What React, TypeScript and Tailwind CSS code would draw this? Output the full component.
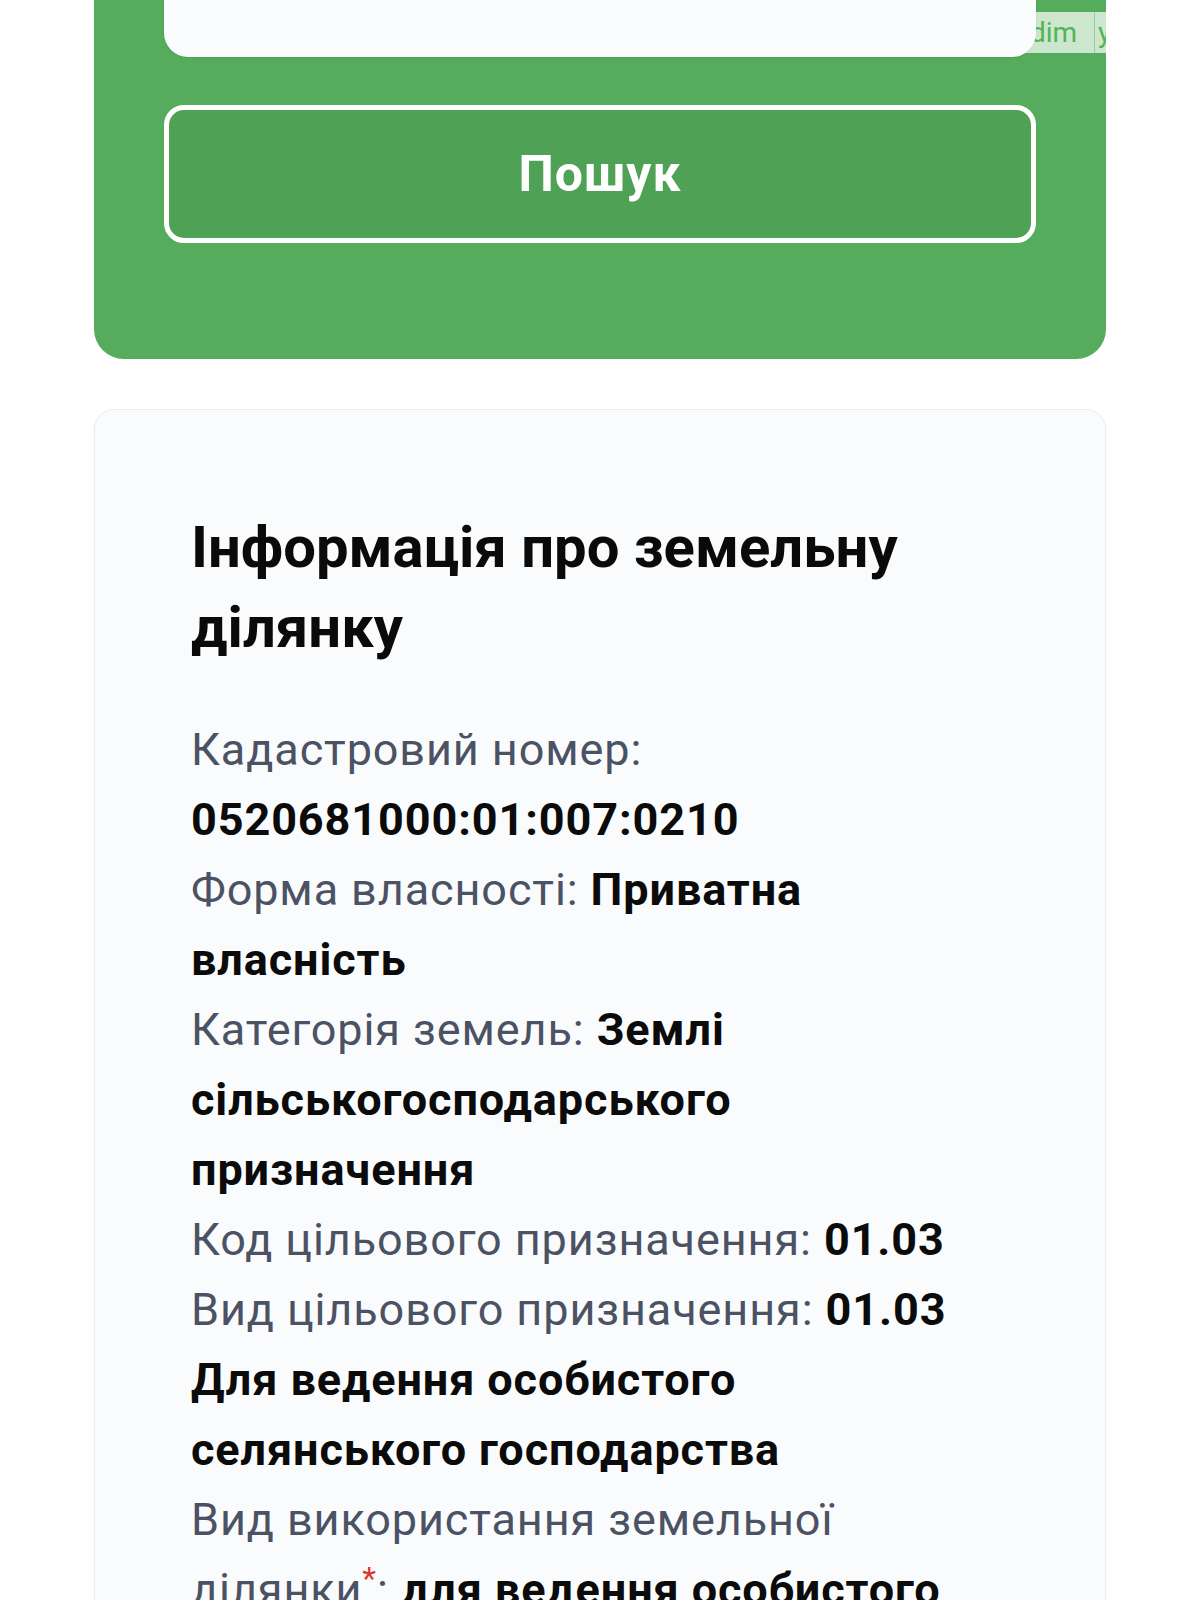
import React from 'react';

type Row = { label: string; value?: string; required?: boolean };

const rows: Row[] = [
  { label: 'Кадастровий номер:', value: '0520681000:01:007:0210' },
  { label: 'Форма власності:', value: 'Приватна власність' },
  { label: 'Категорія земель:', value: 'Землі сільськогосподарського призначення' },
  { label: 'Код цільового призначення:', value: '01.03' },
  { label: 'Вид цільового призначення:', value: '01.03 Для ведення особистого селянського господарства' },
  { label: 'Вид використання земельної ділянки', value: 'для ведення особистого селянського господарства', required: true },
];

function InfoRow({ label, value, required }: Row) {
  return (
    <p className="text-[45px] leading-[70px] tracking-[0.02em] text-[#4a5263]">
      {label}
      {required ? (
        <>
          <sup className="text-[32px] leading-none text-[#e0352b]">*</sup>:
        </>
      ) : null}{' '}
      {value ? <span className="font-bold text-[#0b0b0b]">{value}</span> : null}
    </p>
  );
}

export default function App() {
  return (
    <div
      className="min-h-[1600px] overflow-hidden bg-white px-[94px]"
      style={{ fontFamily: 'Roboto, "Noto Sans", sans-serif' }}
    >
      {/* search panel, top is scrolled off the screen */}
      <div className="relative -mt-[40px] overflow-hidden rounded-b-[30px] bg-[#55ac5c] px-[70px] pb-[116px]">
        {/* translate hint that peeks out from under the input */}
        <div className="absolute right-[-20px] top-[52px] flex h-[41px] w-[170px] items-center bg-[#cde7ce]">
          <span className="w-[122px] text-right text-[28px] leading-none text-[#52b45a]">dim</span>
          <span className="ml-[17px] h-full w-px bg-[#9ccb9f]" />
          <span className="ml-[3px] text-[28px] leading-none text-[#52b45a]">ye</span>
        </div>
        <div className="relative z-10 h-[97px] rounded-b-[24px] bg-[#fbfcfd] shadow-[0_1px_2px_rgba(0,0,0,0.08)]" />
        <button className="mt-[48px] flex h-[138px] w-full items-center justify-center rounded-[20px] border-[5px] border-white bg-[#4fa156] text-[50px] font-bold tracking-[0.02em] text-white">
          Пошук
        </button>
      </div>

      {/* land parcel info card */}
      <div className="mt-[50px] rounded-[20px] border border-[#e9ecf0] bg-[#fafbfc] pb-[80px] pl-[96px] pr-[116px] pt-[97px] shadow-[0_1px_3px_rgba(0,0,0,0.04)]">
        <h2 className="text-[58px] font-bold leading-[80px] text-[#0a0a0a]">
          Інформація про земельну ділянку
        </h2>
        <div className="mt-[48px]">
          {rows.map((r) => (
            <InfoRow key={r.label} {...r} />
          ))}
        </div>
      </div>
    </div>
  );
}
